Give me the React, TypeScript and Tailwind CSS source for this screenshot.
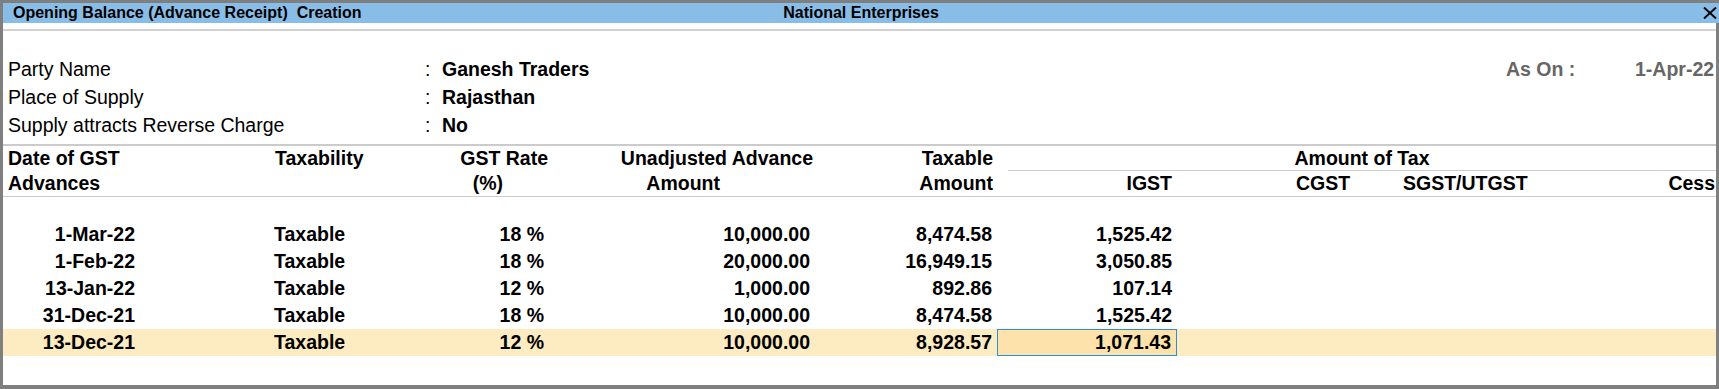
import React from "react";

const rows = [
  { date: "1-Mar-22", tax: "Taxable", rate: "18 %", adv: "10,000.00", taxable: "8,474.58", igst: "1,525.42" },
  { date: "1-Feb-22", tax: "Taxable", rate: "18 %", adv: "20,000.00", taxable: "16,949.15", igst: "3,050.85" },
  { date: "13-Jan-22", tax: "Taxable", rate: "12 %", adv: "1,000.00", taxable: "892.86", igst: "107.14" },
  { date: "31-Dec-21", tax: "Taxable", rate: "18 %", adv: "10,000.00", taxable: "8,474.58", igst: "1,525.42" },
  { date: "13-Dec-21", tax: "Taxable", rate: "12 %", adv: "10,000.00", taxable: "8,928.57", igst: "1,071.43" },
];

export default function App() {
  return (
    <div
      className="w-[1719px] h-[389px] bg-[#7f7f7f] pt-[3px] pl-[3px] pb-[4px] flex flex-col overflow-hidden text-black"
      style={{ fontFamily: '"Liberation Sans", Arial, sans-serif' }}
    >
      {/* Title bar */}
      <div className="h-[20px] shrink-0 bg-[#88bde7] grid grid-cols-[1fr_auto_1fr] items-center text-[16px] leading-[20px] font-bold">
        <div className="pl-[10px] whitespace-pre">Opening Balance (Advance Receipt)  Creation</div>
        <div>National Enterprises</div>
        <div className="flex justify-end pr-[2px]">
          <svg width="14" height="12" viewBox="0 0 14 12" className="block">
            <line x1="1" y1="0.5" x2="13" y2="11.5" stroke="#000" strokeWidth="1.9" />
            <line x1="13" y1="0.5" x2="1" y2="11.5" stroke="#000" strokeWidth="1.9" />
          </svg>
        </div>
      </div>

      {/* Body */}
      <div className="flex-1 bg-white mr-[3px] flex flex-col overflow-hidden text-[19.5px]">
        <div className="mt-[6px] h-[2px] bg-[#d2d2d2]" />

        {/* Party section */}
        <div className="pt-[24px] leading-[28px]">
          <div className="flex h-[28px]">
            <div className="w-[422px] pl-[5px]">Party Name</div>
            <div className="w-[17px]">:</div>
            <div className="flex-1 font-bold">Ganesh Traders</div>
            <div className="flex shrink-0 font-bold text-[#666666]">
              <div className="w-[129px]">As On :</div>
              <div className="w-[81px] whitespace-nowrap">1-Apr-22</div>
            </div>
          </div>
          <div className="flex h-[28px]">
            <div className="w-[422px] pl-[5px]">Place of Supply</div>
            <div className="w-[17px]">:</div>
            <div className="flex-1 font-bold">Rajasthan</div>
          </div>
          <div className="flex h-[28px]">
            <div className="w-[422px] pl-[5px]">Supply attracts Reverse Charge</div>
            <div className="w-[17px]">:</div>
            <div className="flex-1 font-bold">No</div>
          </div>
        </div>

        {/* Table header */}
        <div className="mt-[5px] h-[2px] bg-[#cbcbcb]" />
        <div className="flex font-bold leading-[25px] whitespace-nowrap border-b border-[#cccccc]">
          <div className="w-[137px] pl-[5px]">
            <div>Date of GST</div>
            <div>Advances</div>
          </div>
          <div className="w-[280px] pl-[135px]">
            <div>Taxability</div>
            <div>&nbsp;</div>
          </div>
          <div className="w-[130px] text-right">
            <div className="pr-[2px]">GST Rate</div>
            <div className="pr-[47px]">(%)</div>
          </div>
          <div className="w-[265px] text-right">
            <div className="pr-[2px]">Unadjusted Advance</div>
            <div className="pr-[95px]">Amount</div>
          </div>
          <div className="w-[182px] text-right pr-[4px]">
            <div>Taxable</div>
            <div>Amount</div>
          </div>
          <div className="flex-1 flex flex-col">
            <div className="pl-[11px]">
              <div className="h-[25px] text-center border-b border-[#cccccc]">Amount of Tax</div>
            </div>
            <div className="flex h-[25px]">
              <div className="w-[180px] text-right pr-[5px]">IGST</div>
              <div className="w-[203px] pl-[119px]">CGST</div>
              <div className="w-[180px] pl-[23px]">SGST/UTGST</div>
              <div className="flex-1 text-right pr-[1px]">Cess</div>
            </div>
          </div>
        </div>

        {/* Data rows */}
        <div className="pt-[24px] font-bold leading-[27px] whitespace-nowrap">
          {rows.map((r, i) => {
            const active = i === rows.length - 1;
            return (
              <div key={i} className={`flex h-[27px] ${active ? "bg-[#fdebc2]" : ""}`}>
                <div className="w-[137px] text-right pr-[5px]">{r.date}</div>
                <div className="w-[280px] pl-[134px]">{r.tax}</div>
                <div className="w-[130px] text-right pr-[6px]">{r.rate}</div>
                <div className="w-[265px] text-right pr-[5px]">{r.adv}</div>
                <div className="w-[182px] text-right pr-[5px]">{r.taxable}</div>
                <div
                  className={`w-[180px] text-right pr-[5px] ${
                    active ? "bg-[#fde3ab] border border-[#2a8fd4] leading-[25px]" : ""
                  }`}
                >
                  {r.igst}
                </div>
                <div className="flex-1" />
              </div>
            );
          })}
        </div>
      </div>
    </div>
  );
}
